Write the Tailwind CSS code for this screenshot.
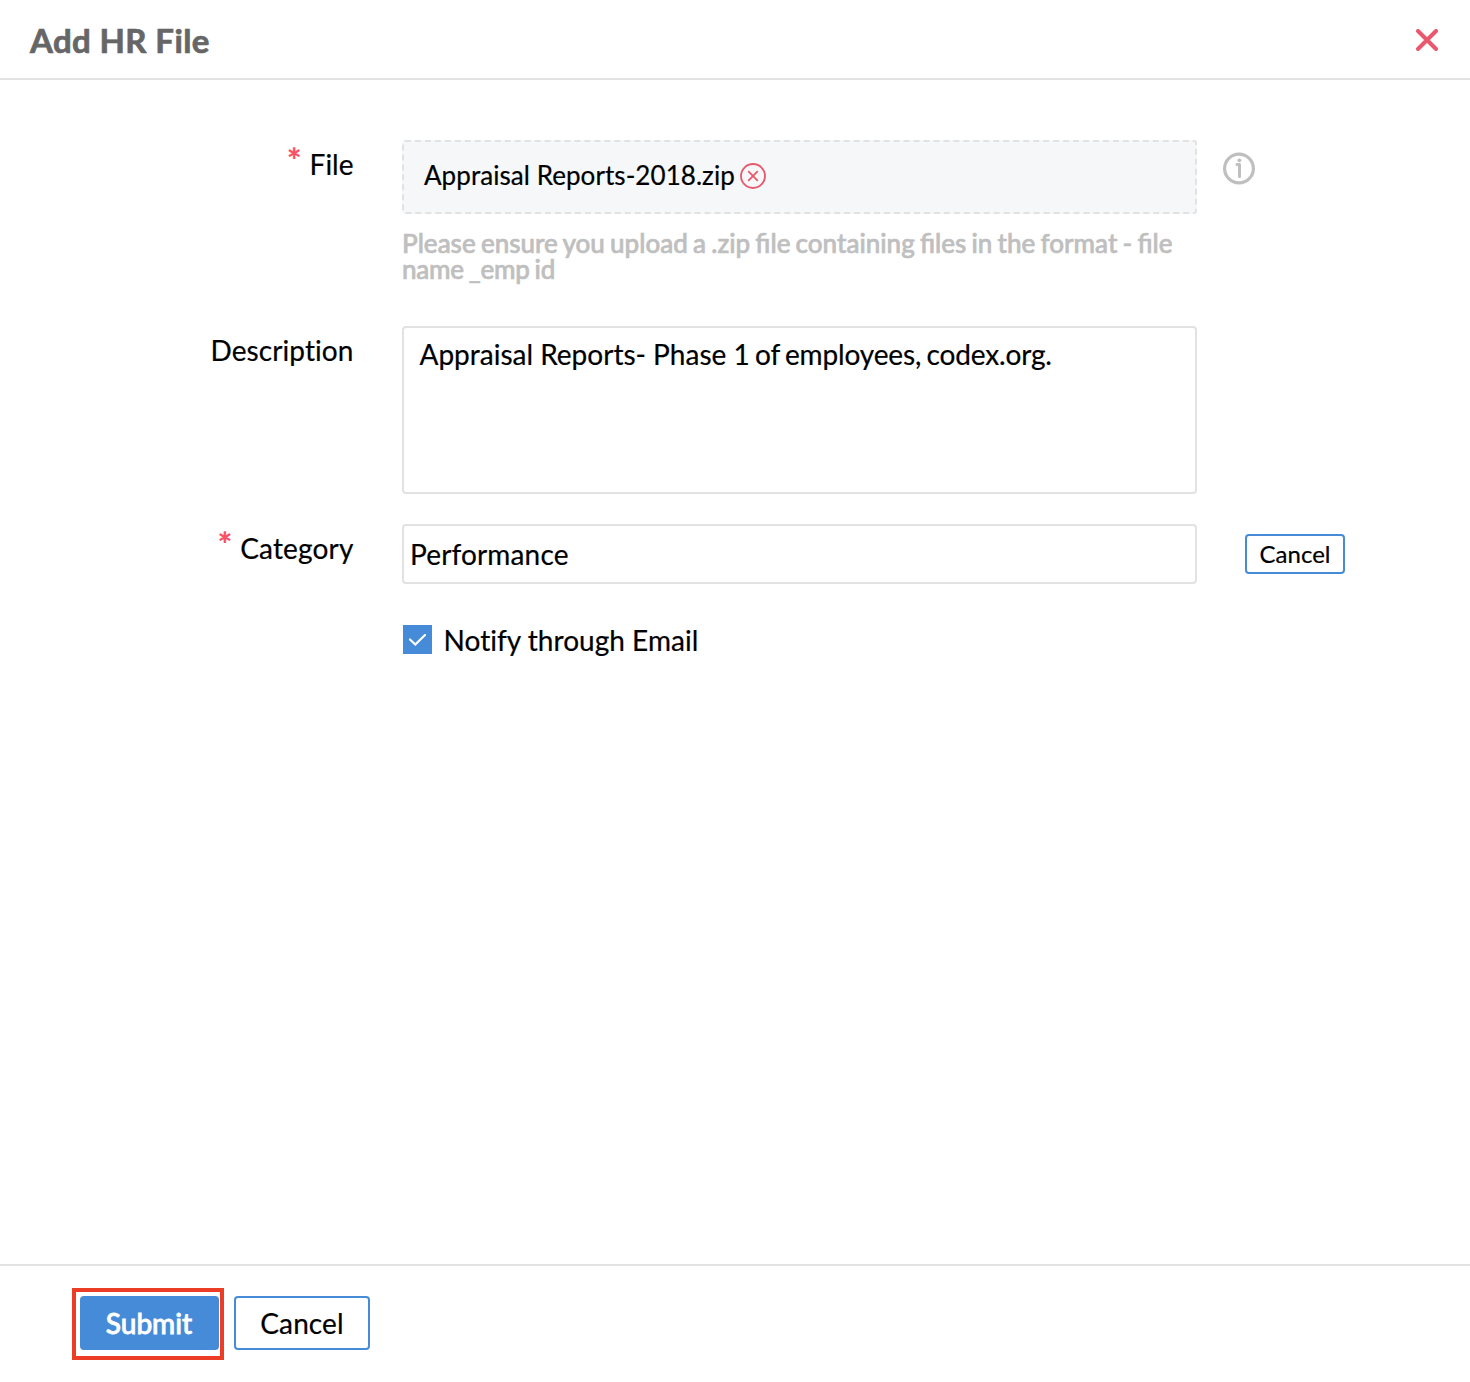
<!DOCTYPE html>
<html lang="en">
<head>
<meta charset="utf-8">
<title>Add HR File</title>
<script src="https://cdn.jsdelivr.net/npm/@tailwindcss/browser@4"></script>
</head>
<body class="flex h-[1382px] w-[1470px] flex-col overflow-hidden bg-white font-['Lato',sans-serif] text-[28px] leading-[34px] text-black [-webkit-text-stroke-width:0.2px] [font-variant-ligatures:none]">
  <header class="flex h-20 shrink-0 items-center justify-between border-b-2 border-[#e2e2e2] pr-8 pl-[30px]">
    <h1 class="pt-0.5 text-[33px] leading-10 font-bold tracking-[0.38px] text-[#666] [-webkit-text-stroke-width:0.7px]">Add HR File</h1>
    <button aria-label="Close" class="pt-0.5">
      <svg class="block" width="22" height="22" viewBox="0 0 22 22" fill="none" stroke="#e9586c" stroke-width="4" stroke-linecap="round"><path d="M2 2l18 18M20 2L2 20"/></svg>
    </button>
  </header>

  <main class="grow pt-[60px]">
    <section class="flex h-[186px] items-start">
      <label class="flex w-[353.5px] justify-end gap-2 pt-[7px]"><span class="-mt-[5px] text-[35px] font-bold text-[#fb4f65]">*</span>File</label>
      <div class="ml-[48.5px] w-[795px]">
        <div class="flex h-[74px] items-center gap-[5.5px] rounded-[3px] border-2 border-dashed border-[#e2e2e2] bg-[#f5f7f9] pb-0.5 pl-5 text-[26px]">
          <span class="-mt-0.5 tracking-[0.06px]">Appraisal Reports-2018.zip</span>
          <svg class="block" width="26" height="26" viewBox="0 0 26 26" fill="none" stroke="#e9586c" stroke-width="1.8" stroke-linecap="round"><circle cx="13" cy="13" r="12"/><path d="M8.7 8.7l8.6 8.6M17.3 8.7l-8.6 8.6"/></svg>
        </div>
        <p class="pt-4 text-[26px] leading-[26px] font-medium [word-spacing:-1.35px] whitespace-nowrap text-[#bfbfbf] [-webkit-text-stroke-width:0.7px] [font-variant-ligatures:normal]">Please ensure you upload a .zip file containing files in the format - file<br><span class="tracking-[-0.25px]">name _emp id</span></p>
      </div>
      <svg class="mt-3 ml-[26px] block" width="32" height="33" viewBox="0 0 32 33" fill="none" stroke="#bfbfbf" stroke-linecap="round"><circle cx="16" cy="16.5" r="14.4" stroke-width="3.2"/><path d="M14 12.5h2.5v12" stroke-width="3" stroke-linejoin="round"/><circle cx="16.4" cy="8.3" r="1.9" fill="#bfbfbf" stroke="none"/></svg>
    </section>

    <section class="flex h-[198px] items-start">
      <label class="w-[353.5px] pt-[7px] text-right tracking-[0.08px]">Description</label>
      <div class="ml-[48.5px] h-[168px] w-[795px] rounded-[4px] border-2 border-[#e2e2e2] pt-[9px] pl-[15.5px]">Appraisal Reports- Phase <span class="tracking-[-0.15px] [word-spacing:-1.6px]">1 of employees, codex.org.</span></div>
    </section>

    <section class="flex h-[60px] items-start">
      <label class="flex w-[353.5px] justify-end gap-2 pt-[7px]"><span class="-mt-[5px] text-[35px] font-bold text-[#fb4f65]">*</span><span class="tracking-[0.15px]">Category</span></label>
      <div class="ml-[48.5px] flex h-[60px] w-[795px] items-center rounded-[4px] border-2 border-[#e2e2e2] pl-1.5 tracking-[0.15px]">Performance</div>
      <button class="mt-2.5 ml-12 h-10 w-[100px] rounded-[4px] border-2 border-[#468bd8] text-2xl leading-[34px]">Cancel</button>
    </section>

    <label class="mt-[39px] ml-[403px] flex items-center gap-3">
      <span class="-mt-px flex size-[29px] items-center justify-center bg-[#468bd8]">
        <svg class="block" width="17" height="12" viewBox="0 0 17 12" fill="none" stroke="#fff" stroke-width="2.2" stroke-linecap="round"><path d="M1 5.5l5.3 5L16 1"/></svg>
      </span>
      <span class="-ml-[0.5px] tracking-[0.03px]">Notify through Email</span>
    </label>
  </main>

  <footer class="flex h-[118px] shrink-0 items-start gap-2.5 border-t-2 border-[#e2e2e2] pt-[22px] pl-[72px]">
    <div class="h-[72px] w-[152px] border-4 border-[#ec3d26] p-1">
      <button class="h-[54px] w-[139px] rounded-[4px] bg-[#468bd8] pr-px font-medium text-white [-webkit-text-stroke-width:0.8px]">Submit</button>
    </div>
    <button class="mt-2 h-[54px] w-[136px] rounded-[4px] border-2 border-[#468bd8] tracking-[0.1px]">Cancel</button>
  </footer>
</body>
</html>
